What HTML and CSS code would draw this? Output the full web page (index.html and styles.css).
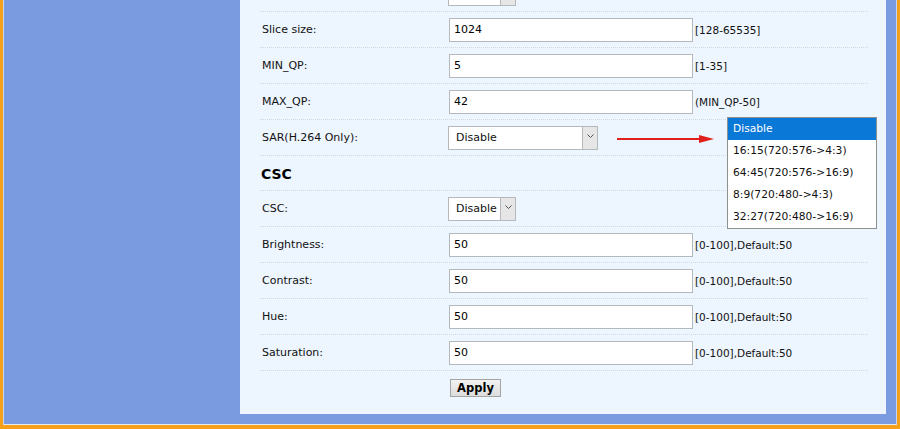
FILE: index.html
```html
<!DOCTYPE html>
<html lang="en">
<head>
    <meta charset="UTF-8">
    <title>Video Encoder Settings</title>
    <link rel="stylesheet" href="styles.css">
</head>
<body>
    <div class="frame">
        <div class="page">
            <div class="panel">
                <div class="row row-cut">
                    <div class="label"></div>
                    <div class="field"><span class="select select-short"><span class="select-text"></span><span class="select-btn"></span></span></div>
                    <div class="hint"></div>
                </div>
                <div class="row">
                    <div class="label">Slice size:</div>
                    <div class="field"><input type="text" class="text-input" value="1024"></div>
                    <div class="hint">[128-65535]</div>
                </div>
                <div class="row">
                    <div class="label">MIN_QP:</div>
                    <div class="field"><input type="text" class="text-input" value="5"></div>
                    <div class="hint">[1-35]</div>
                </div>
                <div class="row">
                    <div class="label">MAX_QP:</div>
                    <div class="field"><input type="text" class="text-input" value="42"></div>
                    <div class="hint">(MIN_QP-50]</div>
                </div>
                <div class="row row-sar">
                    <div class="label">SAR(H.264 Only):</div>
                    <div class="field">
                        <span class="select select-wide"><span class="select-text">Disable</span><span class="select-btn"><svg width="9" height="6" viewBox="0 0 9 6"><path d="M1.5 1.5 L4.5 4.5 L7.5 1.5" fill="none" stroke="#555" stroke-width="1"/></svg></span></span>
                    </div>
                    <div class="hint"></div>
                    <svg class="pointer" width="100" height="12" viewBox="0 0 100 12"><line x1="0" y1="6" x2="84" y2="6" stroke="#e0201c" stroke-width="2"/><path d="M82 2 L97 6 L82 10 Z" fill="#e0201c"/></svg>
                    <ul class="options">
                        <li class="active">Disable</li>
                        <li>16:15(720:576-&gt;4:3)</li>
                        <li>64:45(720:576-&gt;16:9)</li>
                        <li>8:9(720:480-&gt;4:3)</li>
                        <li>32:27(720:480-&gt;16:9)</li>
                    </ul>
                </div>
                <div class="row row-head">
                    <h2>CSC</h2>
                </div>
                <div class="row">
                    <div class="label">CSC:</div>
                    <div class="field">
                        <span class="select select-short"><span class="select-text">Disable</span><span class="select-btn"><svg width="9" height="6" viewBox="0 0 9 6"><path d="M1.5 1.5 L4.5 4.5 L7.5 1.5" fill="none" stroke="#555" stroke-width="1"/></svg></span></span>
                    </div>
                    <div class="hint"></div>
                </div>
                <div class="row">
                    <div class="label">Brightness:</div>
                    <div class="field"><input type="text" class="text-input" value="50"></div>
                    <div class="hint">[0-100],Default:50</div>
                </div>
                <div class="row">
                    <div class="label">Contrast:</div>
                    <div class="field"><input type="text" class="text-input" value="50"></div>
                    <div class="hint">[0-100],Default:50</div>
                </div>
                <div class="row">
                    <div class="label">Hue:</div>
                    <div class="field"><input type="text" class="text-input" value="50"></div>
                    <div class="hint">[0-100],Default:50</div>
                </div>
                <div class="row">
                    <div class="label">Saturation:</div>
                    <div class="field"><input type="text" class="text-input" value="50"></div>
                    <div class="hint">[0-100],Default:50</div>
                </div>
                <div class="actions">
                    <button class="apply">Apply</button>
                </div>
            </div>
        </div>
    </div>
</body>
</html>
```

FILE: styles.css
```css
html, body {
    margin: 0;
    padding: 0;
    height: 100%;
    overflow: hidden;
}
body {
    font-family: "DejaVu Sans", Verdana, sans-serif;
    font-size: 11px;
    color: #111;
    background: #f5a01a;
}
.frame {
    box-sizing: border-box;
    height: 425px;
    margin: 0 3px;
    border-left: 1px solid #c9d4ee;
    border-right: 1px solid #c9d4ee;
    border-bottom: 1px solid #e4e9f4;
    background: #7b9be1;
    overflow: hidden;
}
.page {
    padding: 0 10px 0 236px;
}
.panel {
    display: flow-root;
    background: #edf5fe;
    height: 414px;
    padding: 0 18px 0 20px;
    box-sizing: border-box;
}
.row {
    display: grid;
    grid-template-columns: 189px 245px 1fr;
    align-items: center;
    height: 35px;
    border-bottom: 1px dotted #cfd8e2;
    position: relative;
}
.row-cut {
    margin-top: -24px;
}
.label {
    padding-left: 2px;
}
.hint {
    padding-left: 1px;
    font-size: 10.5px;
}
.text-input {
    box-sizing: border-box;
    width: 244px;
    height: 24px;
    border: 1px solid #b5b8bc;
    background: #fff;
    font: inherit;
    padding: 0 4px;
    margin: 0;
    color: #000;
}
.select {
    display: inline-flex;
    box-sizing: border-box;
    height: 24px;
    border: 1px solid #b5b8bc;
    background: #fff;
    vertical-align: middle;
    margin-left: -1px;
}
.select-wide {
    width: 150px;
}
.select-short {
    width: 68px;
}
.select-text {
    flex: 1;
    line-height: 22px;
    padding-left: 7px;
}
.select-btn {
    width: 15px;
    border-left: 1px solid #b5b8bc;
    background: #e6e6e6;
    display: flex;
    align-items: center;
    justify-content: center;
    padding-bottom: 3px;
    box-sizing: border-box;
}
.row-head {
    display: flex;
    padding-top: 2px;
    box-sizing: border-box;
}
.row-head h2 {
    margin: 0;
    padding-left: 1px;
    font-size: 14px;
    font-weight: bold;
    color: #000;
}
.pointer {
    position: absolute;
    left: 357px;
    top: 13px;
}
.options {
    position: absolute;
    left: 467px;
    top: -3px;
    width: 150px;
    box-sizing: border-box;
    margin: 0;
    padding: 0;
    list-style: none;
    background: #fff;
    border: 1px solid #8e8f8f;
    font-size: 10.7px;
    z-index: 2;
}
.options li {
    height: 22px;
    line-height: 22px;
    padding-left: 5px;
    color: #111;
}
.options li.active {
    background: #0a78d7;
    color: #fff;
}
.actions {
    padding: 8px 0 0 190px;
}
.apply {
    font: bold 11.5px "DejaVu Sans", Verdana, sans-serif;
    width: 51px;
    height: 18px;
    padding: 0;
    border: 1px solid #a5a5a5;
    background: linear-gradient(#f2f2f2, #dcdcdc);
    color: #000;
}
```
